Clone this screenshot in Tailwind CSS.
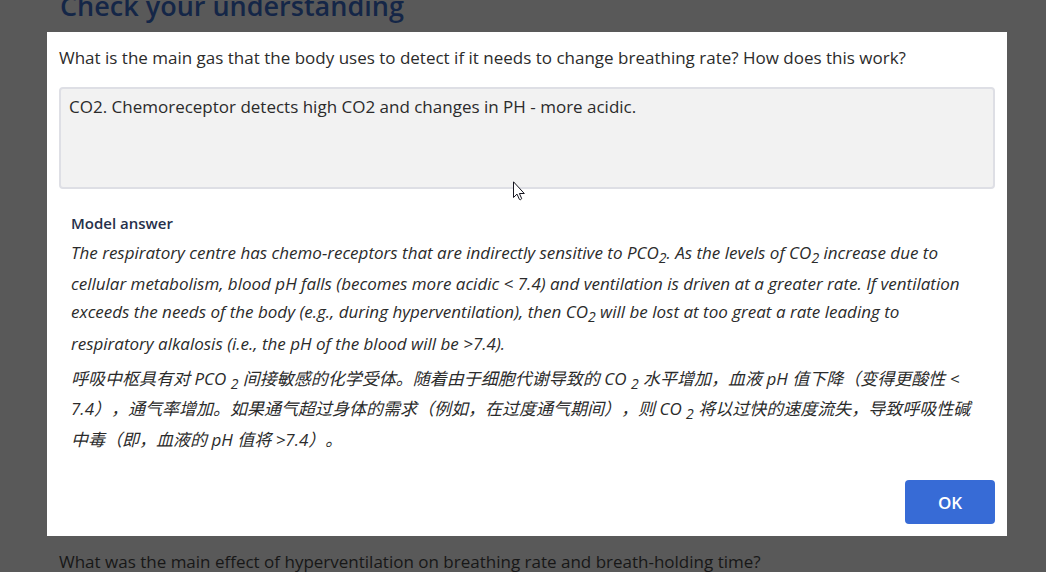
<!DOCTYPE html>
<html lang="en">
<head>
<meta charset="utf-8">
<meta name="viewport" content="width=device-width, initial-scale=1">
<title>Check your understanding</title>
<script src="https://cdn.jsdelivr.net/npm/@tailwindcss/browser@4"></script>
</head>
<body class="relative h-screen overflow-hidden bg-[#595959] font-['Open_Sans','Noto_Sans_CJK_SC',sans-serif] text-[17px] text-[#2b2b2b]">
  <main class="flex h-full flex-col justify-between pl-[59px] pr-[51px]">
    <h1 class="-mt-3 pl-px text-[27px] leading-9 font-semibold text-[#142647]">Check your understanding</h1>
    <p class="-mb-1 leading-7 text-[#171717]">What was the main effect of hyperventilation on breathing rate and breath-holding time?</p>
  </main>

  <div class="absolute inset-0 pt-8 pr-[39px] pl-[47px]">
    <div role="dialog" aria-modal="true" class="flex flex-col bg-white p-3">
      <label for="answer" class="leading-7">What is the main gas that the body uses to detect if it needs to change breathing rate? How does this work?</label>
      <textarea id="answer" readonly class="mt-[15px] block h-[102px] w-full resize-none cursor-default rounded-[4px] border-2 border-[#dedfe5] bg-[#f2f2f2] px-2 py-1 leading-7 outline-none">CO2. Chemoreceptor detects high CO2 and changes in PH - more acidic.</textarea>
      <section class="mt-[22px] px-3">
        <h2 class="text-[15px] leading-6 font-semibold text-[#26304a]">Model answer</h2>
        <p class="mt-1 leading-7 italic">The respiratory centre has chemo-receptors that are indirectly sensitive to PCO<sub class="static align-sub text-[14px] leading-6">2</sub>. As the levels of CO<sub class="static align-sub text-[14px] leading-6">2</sub> increase due to cellular metabolism, blood pH falls (becomes more acidic &lt; 7.4) and ventilation is driven at a greater rate. If ventilation exceeds the needs of the body (e.g., during hyperventilation), then CO<sub class="static align-sub text-[14px] leading-6">2</sub> will be lost at too great a rate leading to respiratory alkalosis (i.e., the pH of the blood will be &gt;7.4).</p>
        <p lang="zh-CN" class="mt-[7px] leading-7 italic [text-spacing-trim:space-all]">呼吸中枢具有对 PCO <sub class="static align-sub text-[14px] leading-[23px]">2</sub> 间接敏感的化学受体。随着由于细胞代谢导致的 CO <sub class="static align-sub text-[14px] leading-[23px]">2</sub> 水平增加，血液 pH 值下降（变得更酸性 &lt; 7.4），通气率增加。如果通气超过身体的需求（例如，在过度通气期间），则 CO <sub class="static align-sub text-[14px] leading-[23px]">2</sub> 将以过快的速度流失，导致呼吸性碱中毒（即，血液的 pH 值将 &gt;7.4）。</p>
      </section>
      <button type="button" class="mt-[26px] h-11 w-[90px] self-end rounded-[4px] bg-[#376bd6] pt-0.5 font-semibold text-white">OK</button>
    </div>
  </div>

  <svg class="pointer-events-none absolute top-[181px] left-[513px]" width="12" height="20" viewBox="0 0 12 20" aria-hidden="true">
    <path d="M.5 .8v15.7l3.5-3.4 2.4 5.3c.9.7 2.1.1 2.2-1l-2.2-4.9h4.9z" fill="#fff" stroke="#15151f" stroke-width="1"/>
  </svg>
</body>
</html>
